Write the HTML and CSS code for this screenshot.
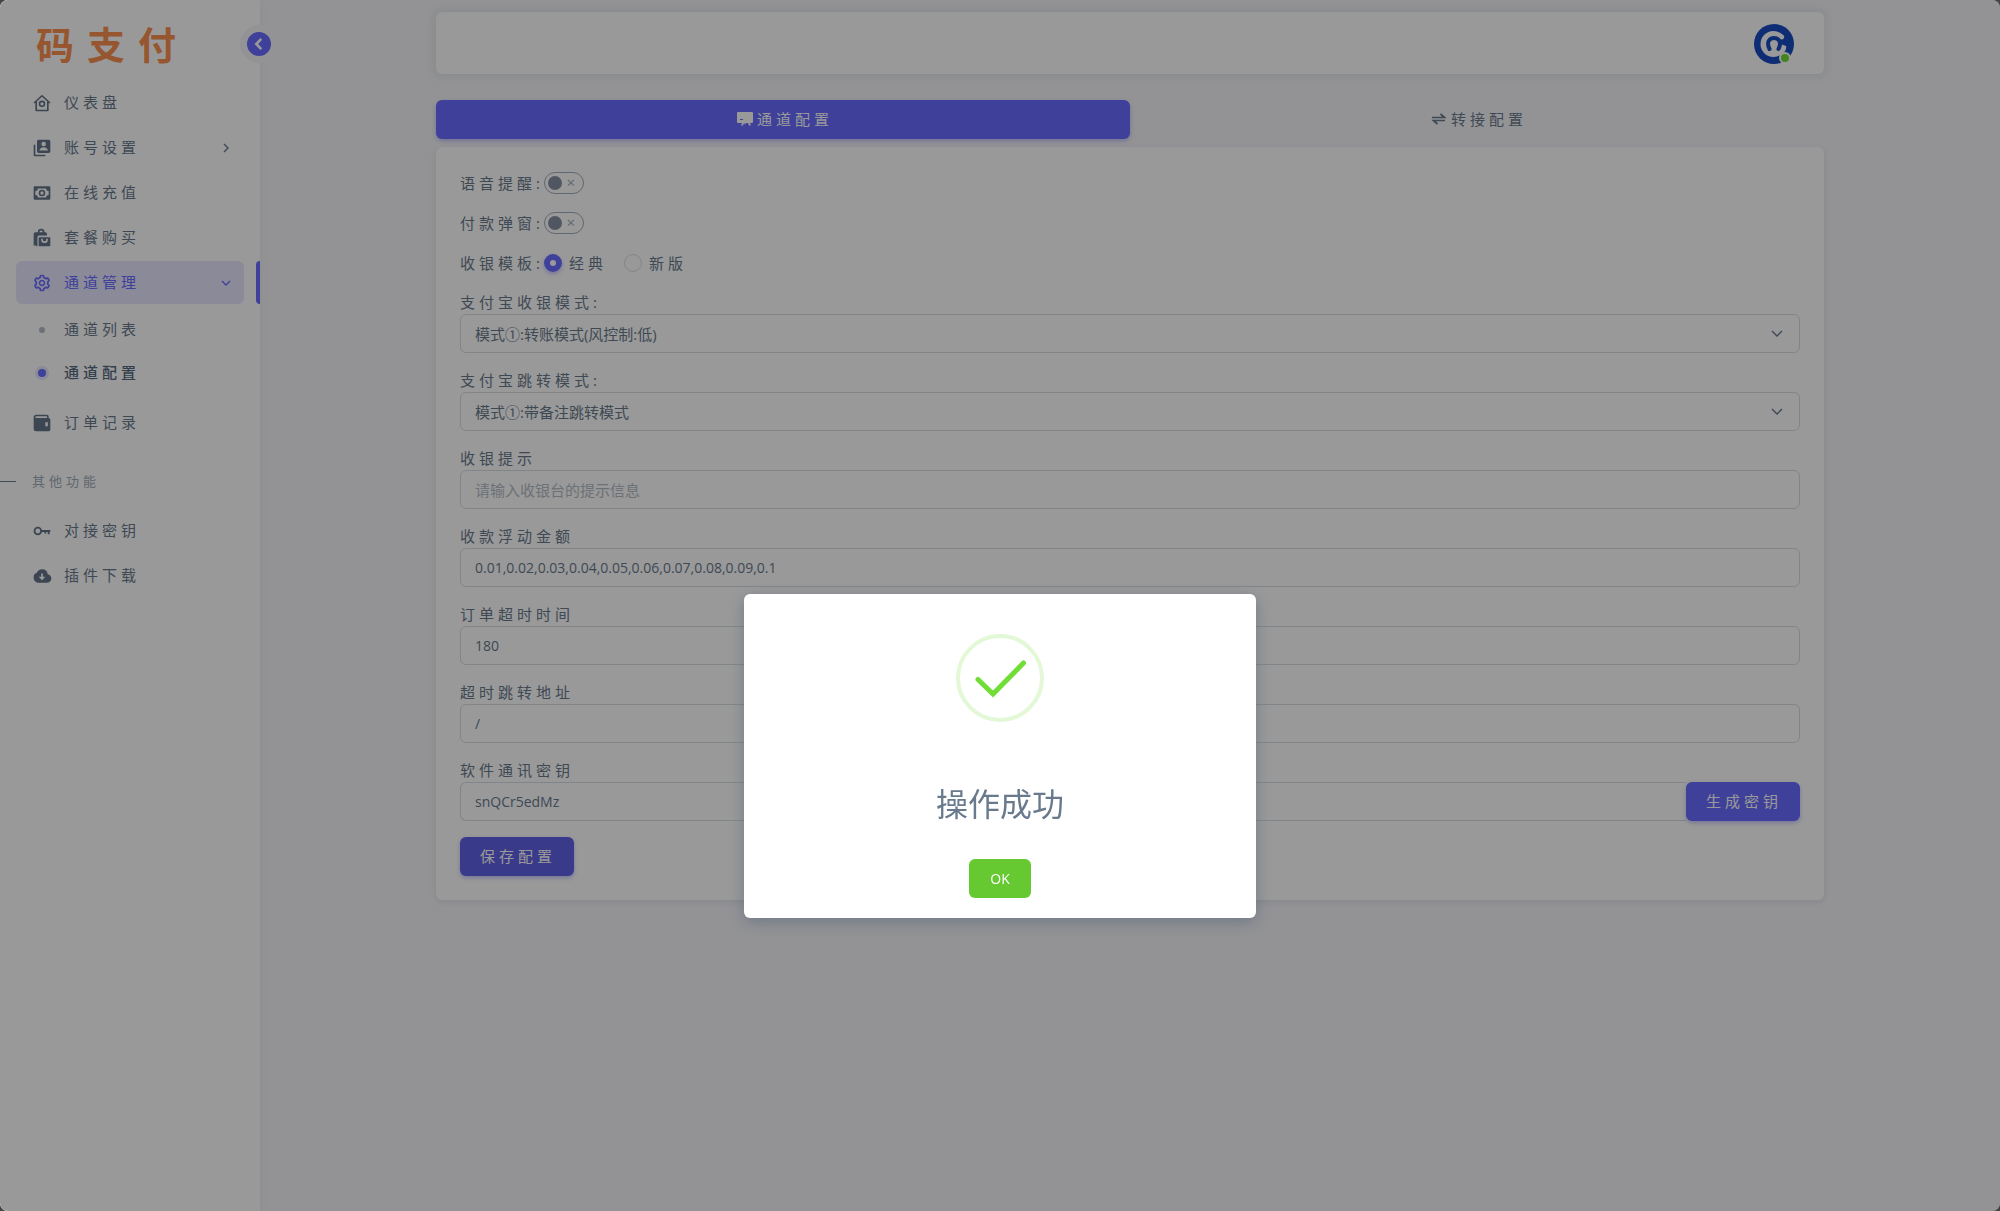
FILE: index.html
```html
<!DOCTYPE html>
<html lang="zh-CN">
<head>
    <meta charset="UTF-8">
    <meta name="viewport" content="width=device-width, initial-scale=1.0">
    <title>通道配置 - 码支付</title>
    <link rel="stylesheet" href="styles.css">
</head>
<body>
    <div class="layout">
        <!-- Sidebar -->
        <aside class="sidebar">
            <div class="brand">
                <a href="#" class="brand-link">码支付</a>
                <button type="button" class="sidebar-toggle" aria-label="收起菜单">
                    <svg viewBox="0 0 24 24" width="22" height="22"><path d="M14.500 6.500 9 12l5.500 5.500" fill="none" stroke="currentColor" stroke-width="2.800"/></svg>
                </button>
            </div>

            <nav class="menu">
                <a href="#" class="menu-item">
                    <svg class="menu-icon" viewBox="0 0 24 24"><path d="M2.500 12 12 3.300l9.500 8.700M5 10.500V21h14V10.500" fill="none" stroke="currentColor" stroke-width="2" stroke-linejoin="round"/><circle cx="12" cy="13" r="3" fill="none" stroke="currentColor" stroke-width="2"/></svg>
                    <span>仪表盘</span>
                </a>
                <a href="#" class="menu-item">
                    <svg class="menu-icon" viewBox="0 0 24 24"><path fill="currentColor" fill-rule="evenodd" d="M8 2h12a2 2 0 0 1 2 2v12a2 2 0 0 1-2 2H8a2 2 0 0 1-2-2V4a2 2 0 0 1 2-2zm6 2.500a2.700 2.700 0 1 0 0 5.400 2.700 2.700 0 0 0 0-5.400zM9 15h10c0-2.500-2.200-4-5-4s-5 1.500-5 4z"/><path fill="currentColor" d="M4 8H2v12c0 1.100.9 2 2 2h12v-2H4z"/></svg>
                    <span>账号设置</span>
                    <svg class="menu-arrow" viewBox="0 0 12 12"><path d="m4 2 4 4-4 4"/></svg>
                </a>
                <a href="#" class="menu-item">
                    <svg class="menu-icon" viewBox="0 0 24 24"><path fill="currentColor" fill-rule="evenodd" d="M3 4h18a1 1 0 0 1 1 1v14a1 1 0 0 1-1 1H3a1 1 0 0 1-1-1V5a1 1 0 0 1 1-1zm4 2.500a3 3 0 0 1-3 3v5a3 3 0 0 1 3 3h10a3 3 0 0 1 3-3v-5a3 3 0 0 1-3-3z"/><circle cx="12" cy="12" r="3" fill="none" stroke="currentColor" stroke-width="2"/></svg>
                    <span>在线充值</span>
                </a>
                <a href="#" class="menu-item">
                    <svg class="menu-icon" viewBox="0 0 24 24"><path fill="currentColor" fill-rule="evenodd" d="M5 22h1.500V11a2 2 0 0 1 2-2H18V7a2 2 0 0 0-2-2h-1a4 4 0 0 0-8 0H4a2 2 0 0 0-2 2v14h3zM9 5a2 2 0 0 1 4 0z"/><path fill="currentColor" fill-rule="evenodd" d="M9 11h12a1 1 0 0 1 1 1v9a1 1 0 0 1-1 1H9a1 1 0 0 1-1-1v-9a1 1 0 0 1 1-1zm2 2v1a4 4 0 0 0 8 0v-1h-2v1a2 2 0 0 1-4 0v-1z"/></svg>
                    <span>套餐购买</span>
                </a>
                <a href="#" class="menu-item active">
                    <svg class="menu-icon" viewBox="0 0 24 24"><path fill="currentColor" d="M12 16c2.206 0 4-1.794 4-4s-1.794-4-4-4-4 1.794-4 4 1.794 4 4 4zm0-6c1.084 0 2 .916 2 2s-.916 2-2 2-2-.916-2-2 .916-2 2-2z"/><path fill="currentColor" d="m2.845 16.136 1 1.730c.531.917 1.809 1.261 2.730.730l.529-.306A8.100 8.100 0 0 0 9 19.402V20c0 1.103.897 2 2 2h2c1.103 0 2-.897 2-2v-.598a8.132 8.132 0 0 0 1.896-1.111l.529.306c.923.530 2.198.188 2.731-.731l.999-1.729a2.001 2.001 0 0 0-.731-2.732l-.505-.292a7.718 7.718 0 0 0 0-2.224l.505-.292a2.002 2.002 0 0 0 .731-2.732l-.999-1.729c-.531-.920-1.808-1.265-2.731-.732l-.529.306A8.100 8.100 0 0 0 15 4.598V4c0-1.103-.897-2-2-2h-2c-1.103 0-2 .897-2 2v.598a8.132 8.132 0 0 0-1.896 1.111l-.529-.306c-.924-.531-2.200-.187-2.731.732l-.999 1.729a2.001 2.001 0 0 0 .731 2.732l.505.292a7.683 7.683 0 0 0 0 2.223l-.505.292a2.003 2.003 0 0 0-.731 2.733zm3.326-2.758A5.703 5.703 0 0 1 6 12c0-.462.058-.926.170-1.378a.999.999 0 0 0-.470-1.108l-1.123-.650.998-1.729 1.145.662a.997.997 0 0 0 1.188-.142 6.071 6.071 0 0 1 2.384-1.399A1 1 0 0 0 11 5.300V4h2v1.300a1 1 0 0 0 .708.956 6.083 6.083 0 0 1 2.384 1.399.999.999 0 0 0 1.188.142l1.144-.661 1 1.729-1.124.649a1 1 0 0 0-.470 1.108c.112.452.170.916.170 1.378 0 .461-.058.925-.171 1.378a1 1 0 0 0 .471 1.108l1.123.649-.998 1.729-1.145-.661a.996.996 0 0 0-1.188.142 6.071 6.071 0 0 1-2.384 1.399A1 1 0 0 0 13 18.700l.002 1.300H11v-1.300a1 1 0 0 0-.708-.956 6.083 6.083 0 0 1-2.384-1.399.992.992 0 0 0-1.188-.141l-1.144.662-1-1.729 1.124-.651a1 1 0 0 0 .471-1.108z"/></svg>
                    <span>通道管理</span>
                    <svg class="menu-arrow" viewBox="0 0 12 12"><path d="m2 4 4 4 4-4"/></svg>
                </a>
                <div class="submenu">
                    <a href="#" class="submenu-item">通道列表</a>
                    <a href="#" class="submenu-item current">通道配置</a>
                </div>
                <a href="#" class="menu-item">
                    <svg class="menu-icon" viewBox="0 0 24 24"><path fill="currentColor" fill-rule="evenodd" d="M5 2h13a2 2 0 0 1 2 2v2a2 2 0 0 1 2 2v12a2 2 0 0 1-2 2H5a3 3 0 0 1-3-3V5a3 3 0 0 1 3-3zm0 2a1 1 0 0 0 0 2h13V4zm11 7v5h3v-5z"/></svg>
                    <span>订单记录</span>
                </a>
                <div class="menu-header">其他功能</div>
                <a href="#" class="menu-item">
                    <svg class="menu-icon" viewBox="0 0 24 24"><circle cx="7" cy="12" r="4" fill="none" stroke="currentColor" stroke-width="2.200"/><path d="M11 12h11M20 12v4M16 12v3" fill="none" stroke="currentColor" stroke-width="2.200"/></svg>
                    <span>对接密钥</span>
                </a>
                <a href="#" class="menu-item">
                    <svg class="menu-icon" viewBox="0 0 24 24"><path fill="currentColor" fill-rule="evenodd" d="M18.900 10A7 7 0 0 0 12 4a7 7 0 0 0-6.200 4.200A5.500 5.500 0 0 0 2 14c0 3.300 2.700 6 6 6h9.500a5 5 0 0 0 1.400-10zM12 17l-4-4h3V9h2v4h3z"/></svg>
                    <span>插件下载</span>
                </a>
            </nav>
        </aside>

        <!-- Page -->
        <div class="page">
            <header class="navbar">
                <a href="#" class="avatar" aria-label="用户">
                    <svg viewBox="0 0 40 40" width="40" height="40">
                        <circle cx="20" cy="20" r="20" fill="#1a4cc4"/>
                        <circle cx="19.500" cy="20" r="13" fill="#fff"/>
                        <path d="M24 15.500 27 14.500 35 11v11h-3.500L28 20.500 25 25z" fill="#1a4cc4"/>
                        <circle cx="27.500" cy="13" r="2.500" fill="#fff"/>
                        <path d="M15.500 25C12 18 15.500 14 20 14s8 4 4.500 11" fill="none" stroke="#1a4cc4" stroke-width="4" stroke-linecap="round"/>
                        <path d="M30 23.500c0 2-1.500 4-4 5" fill="none" stroke="#fff" stroke-width="4" stroke-linecap="round"/>
                    </svg>
                    <span class="online"></span>
                </a>
            </header>

            <main>
                <div class="tabs" role="tablist">
                    <button type="button" class="tab active" role="tab" aria-selected="true">
                        <svg viewBox="0 0 16 14" width="16" height="14"><path fill="currentColor" fill-rule="evenodd" d="M1 0h14a1 1 0 0 1 1 1v9a1 1 0 0 1-1 1h-2l1 2.500h-2L11 11H9l-1 1.500L7 11l-1 2.500H4L5 11H1a1 1 0 0 1-1-1V1a1 1 0 0 1 1-1zm2 7v1h3V7z"/></svg>
                        <span>通道配置</span>
                    </button>
                    <button type="button" class="tab" role="tab" aria-selected="false">
                        <svg viewBox="0 0 16 14" width="16" height="14"><path fill="none" stroke="currentColor" stroke-width="1.700" d="M1 5.500h12.500L9.500 2M14 8.500H2.500l4 3.500"/></svg>
                        <span>转接配置</span>
                    </button>
                </div>

                <form class="card">
                    <div class="row">
                        <label for="voice">语音提醒:</label>
                        <input type="checkbox" id="voice" class="switch">
                    </div>
                    <div class="row">
                        <label for="popup">付款弹窗:</label>
                        <input type="checkbox" id="popup" class="switch">
                    </div>
                    <div class="row">
                        <span>收银模板:</span>
                        <label class="radio"><input type="radio" name="template" checked>经典</label>
                        <label class="radio"><input type="radio" name="template">新版</label>
                    </div>

                    <div class="field">
                        <label for="payMode">支付宝收银模式:</label>
                        <div class="select-wrap">
                            <select id="payMode" class="control">
                                <option>模式①:转账模式(风控制:低)</option>
                            </select>
                            <svg viewBox="0 0 12 8" width="12" height="8"><path d="m1 1 5 5 5-5"/></svg>
                        </div>
                    </div>
                    <div class="field">
                        <label for="jumpMode">支付宝跳转模式:</label>
                        <div class="select-wrap">
                            <select id="jumpMode" class="control">
                                <option>模式①:带备注跳转模式</option>
                            </select>
                            <svg viewBox="0 0 12 8" width="12" height="8"><path d="m1 1 5 5 5-5"/></svg>
                        </div>
                    </div>
                    <div class="field">
                        <label for="tips">收银提示</label>
                        <input type="text" id="tips" class="control" placeholder="请输入收银台的提示信息">
                    </div>
                    <div class="field">
                        <label for="float">收款浮动金额</label>
                        <input type="text" id="float" class="control latin" value="0.01,0.02,0.03,0.04,0.05,0.06,0.07,0.08,0.09,0.1">
                    </div>
                    <div class="field">
                        <label for="timeout">订单超时时间</label>
                        <input type="text" id="timeout" class="control latin" value="180">
                    </div>
                    <div class="field">
                        <label for="timeoutUrl">超时跳转地址</label>
                        <input type="text" id="timeoutUrl" class="control latin" value="/">
                    </div>
                    <div class="field">
                        <label for="secret">软件通讯密钥</label>
                        <div class="input-group">
                            <input type="text" id="secret" class="control latin" value="snQCr5edMz">
                            <button type="button" class="btn">生成密钥</button>
                        </div>
                    </div>
                    <button type="button" class="btn btn-save">保存配置</button>
                </form>
            </main>
        </div>
    </div>

    <!-- Success dialog -->
    <div class="overlay">
        <div class="modal" role="dialog" aria-modal="true" aria-labelledby="modalTitle">
            <svg class="modal-icon" viewBox="0 0 88 88" width="88" height="88">
                <circle cx="44" cy="44" r="42" fill="none" stroke="#e3f8d7" stroke-width="4"/>
                <path d="M22 45.500 37 60l30.500-31" fill="none" stroke="#71dd37" stroke-width="5" stroke-linecap="round"/>
            </svg>
            <h2 id="modalTitle">操作成功</h2>
            <button type="button" class="btn-ok">OK</button>
        </div>
    </div>
</body>
</html>
```
FILE: styles.css
```css
* {
    box-sizing: border-box;
    margin: 0;
    padding: 0;
}

html {
    background-color: #444;
}

body {
    font-family: 'Open Sans', 'Noto Sans CJK SC', sans-serif;
    font-size: 15px;
    line-height: 23px;
    color: #697a8d;
}

a {
    color: inherit;
    text-decoration: none;
}

button,
input,
select {
    font-family: inherit;
    font-size: 15px;
    color: inherit;
}

.layout {
    display: flex;
    min-height: 100vh;
    background-color: #f5f5f9;
    border-radius: 8px;
    letter-spacing: 4px;
}

/* Sidebar */
.sidebar {
    flex: 0 0 260px;
    background-color: #fff;
    border-radius: 8px 0 0 8px;
    box-shadow: 0 2px 6px rgba(161, 172, 184, 0.12);
}

.brand {
    position: relative;
    display: flex;
    align-items: center;
    height: 81px;
    padding: 4px 36px 0;
}

.brand-link {
    font-family: 'Noto Sans CJK SC', sans-serif;
    font-size: 38px;
    font-weight: 700;
    line-height: 56px;
    letter-spacing: 13px;
    color: #fa8f50;
}

.sidebar-toggle {
    position: absolute;
    top: 25px;
    right: -18px;
    display: flex;
    align-items: center;
    justify-content: center;
    width: 38px;
    height: 38px;
    border: 7px solid #f5f5f9;
    border-radius: 50%;
    background-color: #696cff;
    color: #fff;
}

.sidebar-toggle svg {
    flex: none;
}

.menu {
    display: flex;
    flex-direction: column;
    gap: 2px;
}

.menu-item {
    position: relative;
    display: flex;
    align-items: center;
    gap: 12px;
    height: 43px;
    margin: 0 16px;
    padding: 0 16px;
    border-radius: 6px;
}

.menu-icon {
    width: 20px;
    height: 20px;
    color: #65758a;
}

.menu-arrow {
    width: 12px;
    height: 12px;
    margin-left: auto;
    margin-right: -4px;
}

.menu-arrow path,
.select-wrap path {
    fill: none;
    stroke: currentColor;
    stroke-width: 1.4;
}

.menu-item.active,
.menu-item.active .menu-icon {
    color: #696cff;
}

.menu-item.active {
    background-color: rgba(105, 108, 255, 0.16);
}

.menu-item.active::after {
    content: '';
    position: absolute;
    top: 0;
    right: -16px;
    width: 4px;
    height: 43px;
    border-radius: 4px 0 0 4px;
    background-color: #696cff;
}

.submenu {
    padding: 2px 0 5px;
}

.submenu-item {
    display: flex;
    align-items: center;
    height: 43px;
    padding-left: 39px;
}

.submenu-item::before {
    content: '';
    width: 6px;
    height: 6px;
    margin-right: 19px;
    border-radius: 50%;
    background-color: #b4bdc6;
}

.submenu-item.current {
    padding-left: 38px;
    font-weight: 500;
    color: #566a7f;
}

.submenu-item.current::before {
    width: 8px;
    height: 8px;
    margin-right: 18px;
    background-color: #696cff;
    box-shadow: 0 0 0 3px #e7e7ff;
}

.menu-header {
    display: flex;
    align-items: center;
    gap: 16px;
    padding: 24px 0 14px;
    font-size: 13px;
    color: #a1acb8;
}

.menu-header::before {
    content: '';
    width: 16px;
    height: 1px;
    background-color: #697a8d;
}

/* Page */
.page {
    flex: 1;
    max-width: 1440px;
    margin: 0 auto;
    padding: 12px 26px 24px;
}

.navbar {
    display: flex;
    align-items: center;
    justify-content: flex-end;
    height: 62px;
    margin-bottom: 26px;
    padding: 2px 30px 0;
    border-radius: 6px;
    background-color: #fff;
    box-shadow: 0 0 6px 4px rgba(161, 172, 184, 0.15);
}

.avatar {
    position: relative;
    display: flex;
}

.online {
    position: absolute;
    right: 3px;
    bottom: 0;
    width: 12px;
    height: 12px;
    border: 2px solid #fff;
    border-radius: 50%;
    background-color: #71dd37;
}

.tabs {
    display: flex;
    margin-bottom: 8px;
}

.tab {
    flex: 1;
    display: flex;
    align-items: center;
    justify-content: center;
    gap: 4px;
    height: 39px;
    padding: 0 0 2px 4px;
    border: none;
    border-radius: 6px;
    background: transparent;
    letter-spacing: 4px;
}

.tab.active {
    background-color: #696cff;
    color: #fff;
    box-shadow: 0 2px 4px rgba(105, 108, 255, 0.4);
}

.card {
    padding: 24px;
    border-radius: 6px;
    background-color: #fff;
    box-shadow: 0 2px 6px rgba(67, 89, 113, 0.12);
}

.row {
    display: flex;
    align-items: center;
    height: 24px;
    margin-bottom: 16px;
}

.switch {
    position: relative;
    appearance: none;
    width: 40px;
    height: 22px;
    border: 1px solid #a1acb8;
    border-radius: 11px;
}

.switch::before {
    content: '';
    position: absolute;
    top: 3px;
    left: 3px;
    width: 14px;
    height: 14px;
    border-radius: 50%;
    background-color: #8592a3;
}

.switch::after {
    content: '×';
    position: absolute;
    right: 8px;
    font-size: 15px;
    line-height: 19px;
    letter-spacing: 0;
    color: #a1acb8;
}

.radio {
    display: flex;
    align-items: center;
    gap: 7px;
    margin-right: 17px;
}

.radio input {
    appearance: none;
    width: 18px;
    height: 18px;
    border: 1px solid #d9dee3;
    border-radius: 50%;
}

.radio input:checked {
    border: 6px solid #696cff;
    box-shadow: 0 2px 4px rgba(105, 108, 255, 0.4);
}

.field {
    margin-bottom: 16px;
}

.field label {
    display: block;
}

.control {
    display: block;
    width: 100%;
    height: 39px;
    padding: 0 14px;
    border: 1px solid #d9dee3;
    border-radius: 6px;
    background-color: #fff;
    outline: none;
    appearance: none;
    letter-spacing: 0;
}

.control::placeholder {
    color: #b4bdc6;
}

.latin {
    font-size: 14px;
}

.select-wrap {
    position: relative;
}

.select-wrap svg {
    position: absolute;
    top: 16px;
    right: 17px;
    pointer-events: none;
}

.input-group {
    display: flex;
}

.input-group .control {
    flex: 1;
    border-right: none;
    border-radius: 6px 0 0 6px;
}

.btn {
    height: 39px;
    padding: 0 18px 2px 20px;
    border: none;
    border-radius: 6px;
    background-color: #696cff;
    color: #fff;
    letter-spacing: 4px;
    box-shadow: 0 2px 4px rgba(105, 108, 255, 0.4);
}

.btn-save {
    display: block;
    background-color: #5f61e6;
}

/* Dialog */
.overlay {
    position: fixed;
    inset: 0;
    display: flex;
    align-items: center;
    justify-content: center;
    padding-top: 300px;
    border-radius: 8px;
    background-color: rgba(0, 0, 0, 0.4);
}

.modal {
    display: flex;
    flex-direction: column;
    align-items: center;
    width: 512px;
    padding: 40px 20px 20px;
    border-radius: 6px;
    background-color: #fff;
    box-shadow: 0 4px 16px rgba(67, 89, 113, 0.45);
}

.modal h2 {
    margin: 58px 0 31px;
    font-size: 32px;
    font-weight: 400;
    line-height: 48px;
}

.btn-ok {
    width: 62px;
    height: 39px;
    border: none;
    border-radius: 6px;
    background-color: #67c932;
    color: #fff;
    font-size: 14px;
}
```
